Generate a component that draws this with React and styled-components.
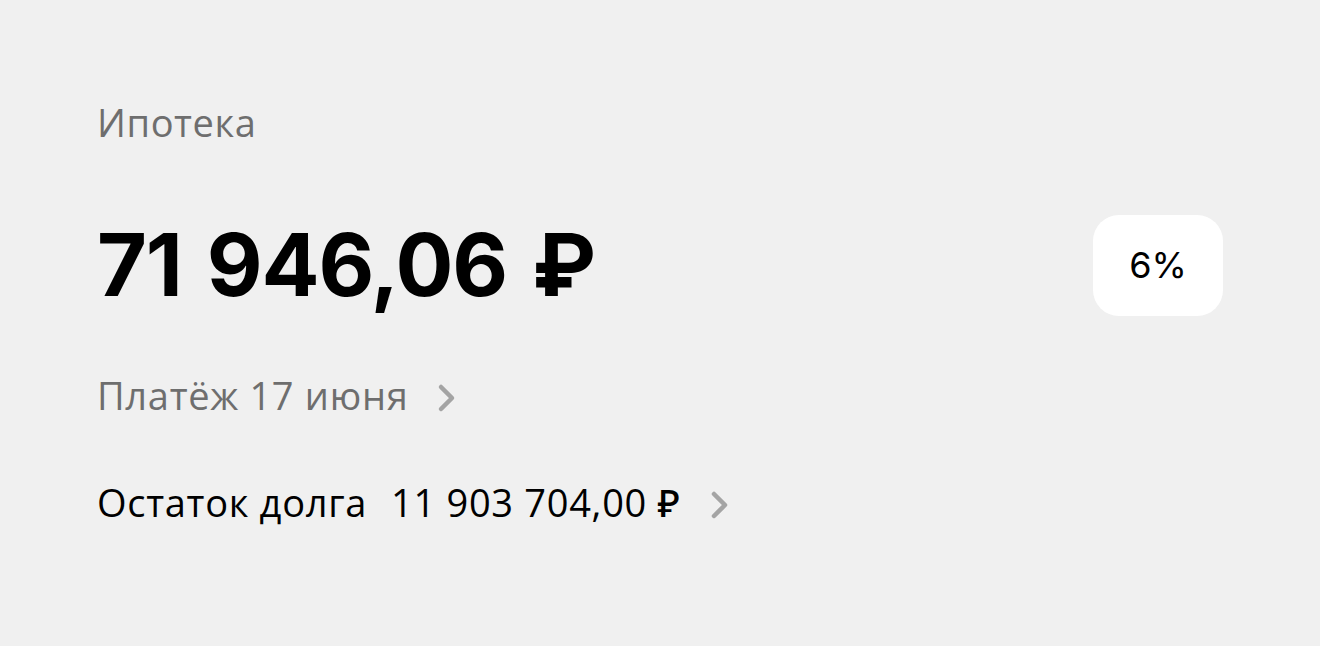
import React from "react";
import styled, { createGlobalStyle } from "styled-components";

const Global = createGlobalStyle`
  html, body { margin: 0; padding: 0; background: #f0f0f0; }
  body { font-family: "Open Sans", "Noto Sans", sans-serif; }
`;

const Page = styled.div`
  width: 1320px;
  height: 646px;
  box-sizing: border-box;
  padding: 98px 97px 0 97px;
  background: #f0f0f0;
`;

const Title = styled.div`
  font-size: 38px;
  font-weight: 500;
  line-height: 48px;
  color: #6e6e6e;
  letter-spacing: 0.6px;
`;

const AmountRow = styled.div`
  display: flex;
  align-items: center;
  justify-content: space-between;
  margin-top: 68px;
  height: 102px;
`;

const Amount = styled.div`
  font-family: "Inter", sans-serif;
  font-weight: 700;
  font-size: 86px;
  letter-spacing: -1.2px;
  word-spacing: 6px;
  color: #000;
  line-height: 102px;
`;

const Badge = styled.div`
  width: 130px;
  height: 101px;
  border-radius: 26px;
  background: #fff;
  display: flex;
  align-items: center;
  justify-content: center;
  font-family: "Inter", sans-serif;
  font-size: 36px;
  color: #000;
`;

const LinkRow = styled.div`
  display: flex;
  align-items: center;
  gap: ${p => p.$gap || 28}px;
  margin-top: ${p => p.$mt}px;
  font-size: 38px;
  font-weight: 500;
  line-height: 48px;
  color: ${p => p.$color};
  letter-spacing: 0.7px;
`;

const Value = styled.span`
  margin-left: 24px;
`;

const Icon = styled.svg`
  margin-top: 6px;
`;

const Chevron = () => (
  <Icon width="22" height="30" viewBox="0 0 22 30">
    <path d="M5 4 L16 15 L5 26" fill="none" stroke="#a4a4a4" strokeWidth="4.5" strokeLinecap="round" strokeLinejoin="round" />
  </Icon>
);

export default function App() {
  return (
    <Page>
      <Global />
      <Title>Ипотека</Title>
      <AmountRow>
        <Amount>71 946,06 ₽</Amount>
        <Badge>6%</Badge>
      </AmountRow>
      <LinkRow $mt={55} $color="#6e6e6e">
        <span>Платёж 17 июня</span>
        <Chevron />
      </LinkRow>
      <LinkRow $mt={59} $color="#000">
        <span>Остаток долга<Value>11 903 704,00 ₽</Value></span>
        <Chevron />
      </LinkRow>
    </Page>
  );
}
